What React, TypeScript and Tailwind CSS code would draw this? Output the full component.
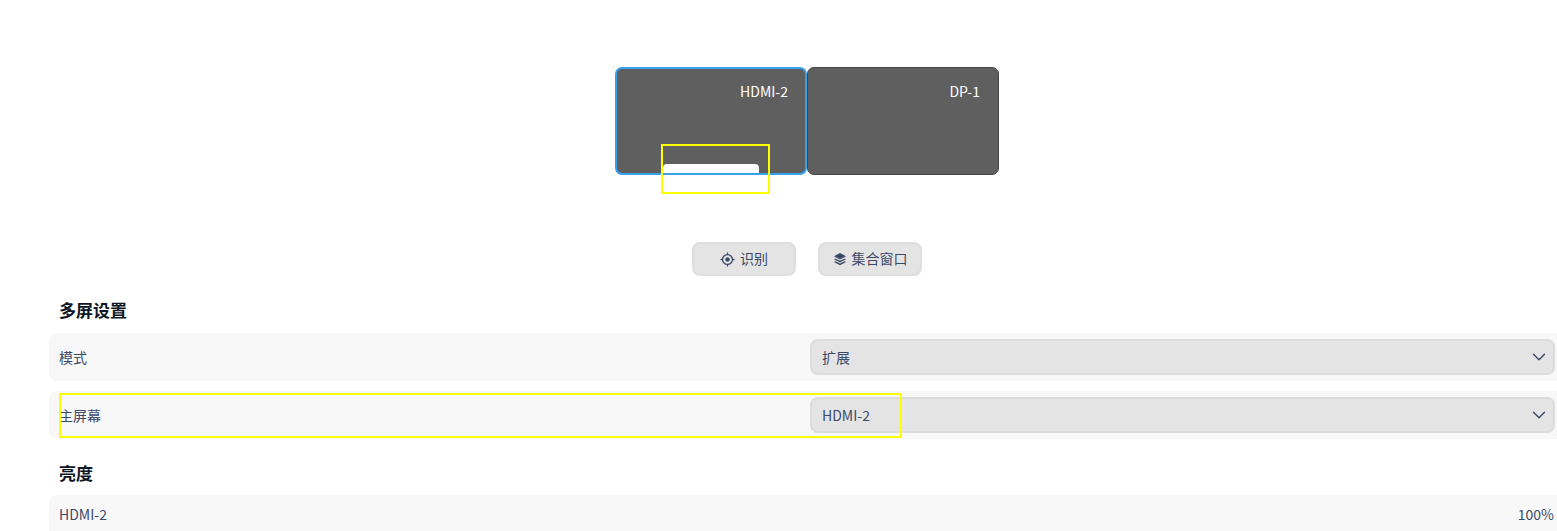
import { ChevronDown } from "lucide-react";

const FONT = "font-['Noto_Sans_CJK_SC','Noto_Sans',sans-serif]";

function Monitor({ name, active }: { name: string; active?: boolean }) {
  return (
    <div
      className={`relative w-[192px] h-[108px] rounded-[7px] bg-[#5f5f5f] ${
        active ? "border-2 border-[#34a2ee]" : "border border-[#444444]"
      }`}
    >
      <span
        className={`absolute text-[14px] leading-5 text-white ${
          active ? "top-[12px] right-[17px]" : "top-[13px] right-[18px]"
        }`}
      >
        {name}
      </span>
      {active && <div className="absolute bottom-0 left-[46px] w-[96px] h-[9px] bg-white rounded-t-[4px]" />}
    </div>
  );
}

function ToolButton({ icon, label }: { icon: React.ReactNode; label: string }) {
  return (
    <button className="w-[104px] h-[34px] flex items-center justify-center gap-[5px] rounded-[8px] border-2 border-[#dedede] bg-[#e4e4e4] text-[14px] leading-[20px] text-[#3c4a68]">
      {icon}
      <span className="-translate-y-px">{label}</span>
    </button>
  );
}

function LocateIcon() {
  return (
    <svg width="15" height="15" viewBox="0 0 14 14" fill="none" stroke="#3c4a68" strokeWidth="1.2">
      <circle cx="7" cy="7" r="4.6" />
      <circle cx="7" cy="7" r="2.1" fill="#3c4a68" stroke="none" />
      <path d="M7 0.5v2M7 11.5v2M0.5 7h2M11.5 7h2" />
    </svg>
  );
}

function LayersIcon() {
  return (
    <svg width="14" height="14" viewBox="0 0 14 14" fill="#3c4a68">
      <path d="M7 1l6 3.2L7 7.4 1 4.2z" />
      <path d="M2.4 6.4L7 8.8l4.6-2.4L13 7.2 7 10.4 1 7.2z" />
      <path d="M2.4 9.2L7 11.6l4.6-2.4 1.4.8L7 13.2 1 10z" />
    </svg>
  );
}

function SelectRow({ label, value }: { label: string; value: string }) {
  return (
    <div className="h-[48px] flex items-center justify-between rounded-l-[8px] bg-[#f8f8f8] pl-[10px] pr-[2px]">
      <span className="text-[14px] text-[#3c4a68]">{label}</span>
      <div className="w-[745px] h-[36px] flex items-center justify-between rounded-[8px] border-2 border-[#dcdcdc] bg-[#e4e4e4] pl-[10px] pr-[3px]">
        <span className="text-[14px] text-[#3c4a68]">{value}</span>
        <ChevronDown size={22} strokeWidth={1.6} color="#3c4a68" />
      </div>
    </div>
  );
}

export default function App() {
  return (
    <div className={`relative h-[531px] w-full overflow-hidden bg-white ${FONT}`}>
      <div className="flex justify-center pt-[67px] pl-[57px]">
        <Monitor name="HDMI-2" active />
        <Monitor name="DP-1" />
      </div>

      <div className="flex justify-center gap-[22px] pt-[67px] pl-[57px]">
        <ToolButton icon={<LocateIcon />} label="识别" />
        <ToolButton icon={<LayersIcon />} label="集合窗口" />
      </div>

      <div className="pl-[49px]">
        <h2 className="mt-[22px] h-[24px] pl-[10px] text-[17px] leading-[24px] font-bold text-[#0d1726]">多屏设置</h2>
        <div className="mt-[11px] flex flex-col gap-[10px]">
          <SelectRow label="模式" value="扩展" />
          <SelectRow label="主屏幕" value="HDMI-2" />
        </div>
        <h2 className="mt-[22px] h-[24px] pl-[10px] text-[17px] leading-[24px] font-bold text-[#0d1726]">亮度</h2>
        <div className="mt-[10px] h-[38px] flex items-center justify-between rounded-tl-[8px] bg-[#f8f8f8] pl-[10px] pr-[3px]">
          <span className="text-[14px] text-[#3c4a68]">HDMI-2</span>
          <span className="text-[14px] text-[#3c4a68]">100%</span>
        </div>
      </div>

      {/* yellow annotation boxes drawn over the capture */}
      <div className="absolute left-[661px] top-[144px] w-[109px] h-[50px] border-2 border-[#ffff00]" />
      <div className="absolute left-[59px] top-[393px] w-[843px] h-[45px] border-2 border-[#ffff00]" />
    </div>
  );
}
